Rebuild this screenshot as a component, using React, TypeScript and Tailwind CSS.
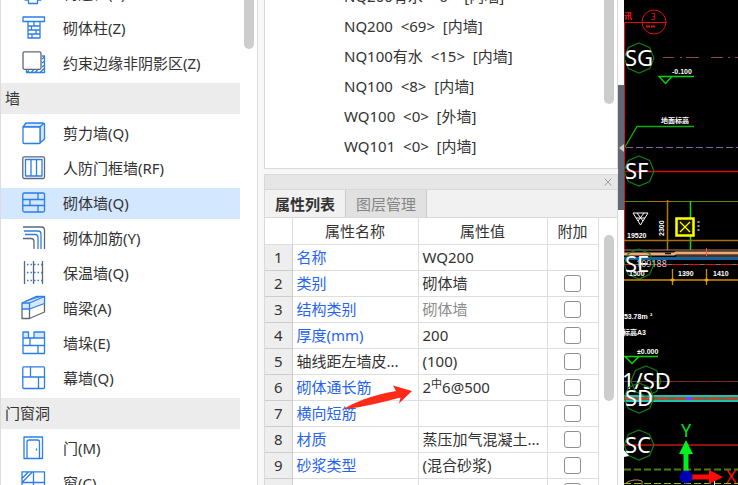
import { ReactNode, useState } from 'react';
import { X } from 'lucide-react';
import clsx from 'clsx';

interface ToolItem {
  label: string;
  icon: ReactNode;
}

interface Property {
  name: string;
  value: ReactNode;
  plainName?: boolean;
  mutedValue?: boolean;
  noExtra?: boolean;
}

const BLUE = '#2b7de9';
const SLATE = '#5f6675';

function Icon({ children }: { children: ReactNode }) {
  return (
    <svg
      viewBox="0 0 24 24"
      className="h-6 w-6 shrink-0 overflow-visible"
      fill="none"
      stroke={BLUE}
      strokeWidth="1.3"
      strokeLinejoin="round"
      aria-hidden="true"
    >
      {children}
    </svg>
  );
}

const columnTools: ToolItem[] = [
  {
    label: '构造柱(Z)',
    icon: (
      <Icon>
        <path d="M3 6h16v13h-3.5v3.5h-9V19H3z" />
      </Icon>
    ),
  },
  {
    label: '砌体柱(Z)',
    icon: (
      <Icon>
        <path d="M1 1h21.5v4.5H1zM6 5.5V22h12V5.5M6 10h12M6 14h12M6 18h12M12 5.5V10M9.5 10v4M14 14v4M10 18v4" />
      </Icon>
    ),
  },
  {
    label: '约束边缘非阴影区(Z)',
    icon: (
      <Icon>
        <path d="M4.5 19v2.5h18V5H20M20 8l2.5-2M20 12l2.5-2M20 16l2.5-2M18 21.5l4-4M13 21.5l2.5-2.5M9 21.5l2.5-2.5M5 21.5l2-2" />
        <rect x="1" y="0.8" width="18" height="17.5" rx="1.5" fill="#fff" stroke={SLATE} />
      </Icon>
    ),
  },
];

const wallTools: ToolItem[] = [
  {
    label: '剪力墙(Q)',
    icon: (
      <Icon>
        <path d="M1 6l3-4h17l1.5.5V18L18 22V6z" fill="#d6e8fd" />
        <rect x="1" y="6" width="17" height="16.5" rx="1" fill="#fff" />
        <path d="M18 6l4-4" />
      </Icon>
    ),
  },
  {
    label: '人防门框墙(RF)',
    icon: (
      <Icon>
        <rect x="0.8" y="0.8" width="21.7" height="21.7" rx="1.5" stroke={SLATE} />
        <path d="M3.5 3.5h16.5v16.5H3.500zM9 3.5V20M14.5 3.5V20" />
      </Icon>
    ),
  },
  {
    label: '砌体墙(Q)',
    icon: (
      <Icon>
        <rect x="0.8" y="2" width="21.7" height="19" rx="1.5" />
        <path d="M.8 8.5h21.7M.8 14.5h21.7M16 2v6.5M8 8.5v6M16 14.5V21" />
      </Icon>
    ),
  },
  {
    label: '砌体加筋(Y)',
    icon: (
      <Icon>
        <path d="M1 1h18.5q3 0 3 3v19" stroke={SLATE} />
        <path d="M2 5h14q3 0 3 3v15M3 8.5h10q3 0 3 3V23" />
        <path d="M1 12.5h8q3 0 3 3V23" stroke={SLATE} />
      </Icon>
    ),
  },
  {
    label: '保温墙(Q)',
    icon: (
      <Icon>
        <path d="M2.5 0v23M11.5 0v23M20.5 0v23" stroke={SLATE} />
        <path d="M5 3.5h15M5 11.5h15M5 19.5h15" strokeDasharray="1.5 2" />
      </Icon>
    ),
  },
  {
    label: '暗梁(A)',
    icon: (
      <Icon>
        <path d="M0 13v9.5h7.5V13M7.5 22.5l15-6.5V8" stroke={SLATE} />
        <path d="M0 7L14 .5h8.500V7.5L7.5 13H0z" fill="#d6e8fd" />
        <path d="M0 7h7.5l15-6.5M7.5 7v6M4 5l14-4.500" />
      </Icon>
    ),
  },
  {
    label: '墙垛(E)',
    icon: (
      <Icon>
        <path d="M1 1h5.5v6H1zM12 1h10.5v6H12z" fill="#d6e8fd" />
        <path d="M1 7v15.5h21.5V7M6.5 7H12M1 14.5h21.5M8 7v7.5M16 14.5v8" />
      </Icon>
    ),
  },
  {
    label: '幕墙(Q)',
    icon: (
      <Icon>
        <rect x="0.8" y="0.8" width="21.7" height="21.7" rx="1" />
        <path d="M.8 11h21.7M8.500.8V11M16.5 11v11.5" />
      </Icon>
    ),
  },
];

const openingTools: ToolItem[] = [
  {
    label: '门(M)',
    icon: (
      <Icon>
        <path d="M2 1h18.5v21.5H2zM5 22.5V6q0-2 2-2h8.5q2 0 2 2v16.5M14.5 12.5v2" />
      </Icon>
    ),
  },
  {
    label: '窗(C)',
    icon: (
      <Icon>
        <path d="M0 .8h22.5v21.7H0zM0 11.5h22.5M11.5.8v21.7M0 7.5L6.5.8M0 11.5L10.5.8" />
      </Icon>
    ),
  },
];

const toolGroups = [
  { title: '', items: columnTools },
  { title: '墙', items: wallTools },
  { title: '门窗洞', items: openingTools },
];

const components = [
  'NQ200有水  <6>  [内墙]',
  'NQ200  <69>  [内墙]',
  'NQ100有水  <15>  [内墙]',
  'NQ100  <8>  [内墙]',
  'WQ100  <0>  [外墙]',
  'WQ101  <0>  [内墙]',
];

const properties: Property[] = [
  { name: '名称', value: 'WQ200', noExtra: true },
  { name: '类别', value: '砌体墙' },
  { name: '结构类别', value: '砌体墙', mutedValue: true },
  { name: '厚度(mm)', value: '200' },
  { name: '轴线距左墙皮...', value: '(100)', plainName: true },
  {
    name: '砌体通长筋',
    value: (
      <>
        2<sup className="text-[11px]">中</sup>6@500
      </>
    ),
  },
  { name: '横向短筋', value: '' },
  { name: '材质', value: '蒸压加气混凝土...' },
  { name: '砂浆类型', value: '(混合砂浆)' },
  { name: '', value: '' },
];

function ToolPanel() {
  const [selected, setSelected] = useState('砌体墙(Q)');

  return (
    <nav className="flex w-[258px] shrink-0 justify-between border-x border-[#dcdcdc] bg-white">
      <div className="-mt-[22px] flex w-[239px] flex-col gap-1">
        {toolGroups.map((group) => (
          <div key={group.title} className="flex flex-col gap-1">
            {group.title && (
              <h2 className="flex h-[31px] items-center bg-[#ececec] px-1 pb-0.5">{group.title}</h2>
            )}
            {group.items.map((item) => (
              <button
                key={item.label}
                onClick={() => setSelected(item.label)}
                className={clsx(
                  'flex h-[31px] shrink-0 items-center gap-[17px] pb-0.5 pl-[21px] text-left',
                  selected === item.label && 'bg-[#d3e7ff]'
                )}
              >
                {item.icon}
                {item.label}
              </button>
            ))}
          </div>
        ))}
      </div>
      <div className="mr-[3px] h-[49px] w-[10px] rounded-b-full bg-[#cdcdcd]" />
    </nav>
  );
}

function ComponentList() {
  return (
    <section className="flex h-[169px] shrink-0 justify-between overflow-hidden border-x border-b border-[#d9d9d9] bg-white">
      <ul className="-mt-[19px] pl-[79px]">
        {components.map((name) => (
          <li key={name} className="flex h-[30px] items-center whitespace-pre">
            {name}
          </li>
        ))}
      </ul>
      <div className="mr-[3px] h-[104px] w-[10px] rounded-b-full bg-[#cdcdcd]" />
    </section>
  );
}

function PropertyTable() {
  return (
    <table className="w-[333px] table-fixed border-collapse">
      <colgroup>
        <col className="w-[27px]" />
        <col className="w-[126px]" />
        <col className="w-[129px]" />
        <col className="w-[51px]" />
      </colgroup>
      <thead>
        <tr className="h-[26px]">
          <th className="border-r border-b border-[#dedede]" />
          <th className="border-r border-b border-[#dedede] font-normal">属性名称</th>
          <th className="border-r border-b border-[#dedede] font-normal">属性值</th>
          <th className="border-r border-b border-[#dedede] font-normal">附加</th>
        </tr>
      </thead>
      <tbody>
        {properties.map((property, i) => (
          <tr key={property.name} className="h-[26px]">
            <td className="border-r border-b border-[#cccccc] bg-[#eeeeee] text-center">
              {property.name && i + 1}
            </td>
            <td
              className={clsx(
                'border-r border-b border-[#dedede] pl-1 whitespace-nowrap',
                !property.plainName && 'text-[#2563f5]'
              )}
            >
              {property.name}
            </td>
            <td
              className={clsx(
                'border-r border-b border-[#dedede] pl-1 whitespace-nowrap',
                property.mutedValue && 'text-[#8c8c8c]'
              )}
            >
              {property.value}
            </td>
            <td className="border-r border-b border-[#dedede]">
              {!property.noExtra && (
                <input
                  type="checkbox"
                  aria-label={property.name || '附加'}
                  className="mx-auto block h-[17px] w-[17px] appearance-none rounded-[3px] border border-[#8f8f8f] bg-white checked:bg-[#2b7de9]"
                />
              )}
            </td>
          </tr>
        ))}
      </tbody>
    </table>
  );
}

function PropertyPanel() {
  const [tab, setTab] = useState('属性列表');

  return (
    <section className="relative mt-[5px] flex min-h-0 flex-1 flex-col border-x border-t border-[#d9d9d9] bg-white">
      <div className="flex h-[14px] shrink-0 items-center justify-end bg-[#e6e6e6] pr-[3px]">
        <button aria-label="关闭">
          <X className="h-3 w-3 text-[#9a9a9a]" />
        </button>
      </div>
      <div className="flex h-[29px] shrink-0 border-y border-[#d9d9d9] bg-[#f1f1f1]">
        {['属性列表', '图层管理'].map((name) => (
          <button
            key={name}
            onClick={() => setTab(name)}
            className={clsx(
              'w-[81px] border-r border-[#c8ccd2]',
              tab === name ? 'font-bold' : 'bg-[#e1e1e1] text-[#858585]'
            )}
          >
            {name}
          </button>
        ))}
      </div>
      <div className="flex min-h-0 flex-1 justify-between overflow-hidden">
        <PropertyTable />
        <div className="mt-[17px] mr-[3px] h-[166px] w-[10px] rounded-full bg-[#cdcdcd]" />
      </div>
      {/* pointer to the rebar value */}
      <svg
        viewBox="0 0 70 26"
        className="pointer-events-none absolute top-[209px] left-[80px] h-[26px] w-[70px]"
        aria-hidden="true"
      >
        <path d="M0 24C8 19.5 26 11 51 7L48 1.5 67 7 54 19.500 55.500 13.500C36 19 18 23 0 25z" fill="#ff2a18" />
      </svg>
    </section>
  );
}

function AxisMark({ x = 15, y, label, textX = 1 }: { x?: number; y: number; label: string; textX?: number }) {
  return (
    <>
      <path
        d="M0-15L10.6-10.6 15 0 10.6 10.6 0 15-10.6 10.6-15 0-10.6-10.6z"
        transform={`translate(${x} ${y})`}
        fill="none"
        stroke="#0f7a16"
        strokeWidth="1.2"
      />
      <text x={textX} y={y + 8} fontSize="22" fill="#fff">
        {label}
      </text>
    </>
  );
}

function Drawing() {
  return (
    <main className="min-w-0 flex-1 bg-black">
      <svg className="block h-full w-full" fontFamily='"Noto Sans", "Noto Sans CJK SC", sans-serif'>
        {/* section mark */}
        <g stroke="#e01010" fill="none">
          <path d="M.5 255V22.5H43" />
          <circle cx="30" cy="22" r="12" />
          <path d="M22 26.5h10" strokeWidth="2" strokeDasharray="4 1" />
        </g>
        <text x="0" y="19" fontSize="8" fontWeight="bold" fill="#ff1010">
          讯
        </text>
        <text x="27" y="20" fontSize="8" fill="#ff1010">
          3
        </text>

        <path d="M39 57.5h11M56 57.5h2M62 57.5h13M87 57.5h12M104 57.5h2M111 57.5h400" stroke="#8a4a4a" />
        <AxisMark y={58} label="SG" />
        <path d="M70 76.5H35l6.5 7 6.500-7" stroke="#00d800" strokeWidth="1.3" fill="none" />
        <path d="M1 147L13 126.5H70" stroke="#10b010" strokeWidth="1.3" fill="none" />
        <path d="M2 147.5h2000" stroke="#8a60a5" strokeDasharray="7 3" />

        <path d="M0 171.5h2000" stroke="#d01010" strokeWidth="1.5" />
        <AxisMark y={171} label="SF" />

        {/* wall strip */}
        <path d="M0 201.5h2000" stroke="#5f8a00" />
        <path d="M24 201.5h24" stroke="#b07000" />
        <path d="M43.5 200v50" stroke="#b07800" strokeWidth="1.5" />
        <path d="M66.5 201v49" stroke="#00e020" strokeWidth="1.5" />
        <path d="M0 240.5h2000" stroke="#a87000" strokeWidth="1.5" />
        <path d="M9 213h15l-7.5 12zM12 218h9M13 213l6 8M20 213l-6 8" stroke="#fff" fill="none" />
        <rect x="52.5" y="218.5" width="17" height="17" fill="#151500" stroke="#ffff00" strokeWidth="2.5" />
        <path d="M56 222l10 10M66 222l-10 10" stroke="#ffff00" strokeWidth="1.3" />
        <path d="M74.5 221v11" stroke="#999" strokeWidth="2" strokeDasharray="2 2" />
        <path d="M0 250h2000" stroke="#b08060" />
        <path d="M0 254h50l2-1h2000" stroke="#eda878" strokeWidth="3" fill="none" />
        <path d="M41 253.5h6" stroke="#201008" strokeWidth="1.5" />
        <path d="M52 256h2000" stroke="#6b432b" strokeWidth="1.5" />
        <path d="M0 258.5h2000" stroke="#14619c" strokeWidth="3" />
        <path d="M0 264.5h2000" stroke="#777" />
        <path d="M0 264.5h2000" stroke="#e01010" strokeDasharray="12 4" />
        <path d="M82.5 248v8" stroke="#ff5050" />
        <AxisMark y={264} label="SE" />
        <path d="M0 280h2000M48.5 269v16M82.5 269v16" stroke="#d09000" strokeWidth="1.3" />
        <path d="M46 280l2.500-2 2.500 2-2.500 2zM80 280l2.500-2 2.500 2-2.500 2z" fill="#f0a800" />

        <path d="M0 356.5h34M1 356.5l7 7 7-7" stroke="#00d800" strokeWidth="1.5" fill="none" />

        <path d="M0 381.5h2000" stroke="#5a4040" />
        <path d="M42 381.5h2000" stroke="#8a2020" strokeDasharray="14 4" />
        <path d="M0 398.5h2000" stroke="#20c0b0" strokeWidth="7" />
        <path d="M0 398.5h2000" stroke="#8a5a40" strokeWidth="3" />
        <path d="M0 398.5h2000" stroke="#ff3020" strokeDasharray="10 7" />
        <path d="M62 398.5h6" stroke="#8040ff" strokeWidth="3" />
        <AxisMark x={22} y={381} label="1/SD" textX={-2} />
        <AxisMark y={398} label="SD" />
        <path d="M0 445h2000" stroke="#c01515" strokeWidth="1.5" />
        <AxisMark y={445} label="SC" />
        <path d="M0 450l5 6-5 1z" fill="#fff" />

        {/* small annotations */}
        <g fill="#fff" fontSize="7" fontWeight="bold" fontFamily='"Liberation Sans", "Noto Sans CJK SC", sans-serif'>
          <text x="48" y="74">-0.100</text>
          <text x="37" y="123">地面标高</text>
          <text x="3" y="238">19520</text>
          <text x="40" y="236" transform="rotate(-90 40 236)">2300</text>
          <text x="5" y="276">1500</text>
          <text x="54" y="276">1390</text>
          <text x="89" y="276">1410</text>
          <text x="-4" y="319">953.78m</text>
          <text x="26" y="318">²</text>
          <text x="-1" y="335">标高A3</text>
          <text x="13" y="354">±0.000</text>
        </g>
        <text x="12" y="267" fontSize="9" fill="#ccc">109188</text>

        {/* origin and axes */}
        <path d="M0 469.5h2000" stroke="#4c8000" strokeWidth="2" strokeDasharray="7 3" />
        <path d="M0 483.5h2000" stroke="#86c800" strokeDasharray="7 3" />
        <path d="M2 483q8-5 16-2v4" stroke="#c09060" fill="none" />
        <path d="M90.5 481v20" stroke="#fff" />
        <path d="M62 440l7 14h-4.5v18h-5v-18H55z" fill="#00f020" />
        <path d="M99 477l-14 7v-4.5H66v-5h19V470z" fill="#ff0a0a" />
        <circle cx="62" cy="477" r="6.5" fill="#0000b8" />
        <text x="57" y="437" fontSize="18" fill="#00e020">Y</text>
        <text x="102" y="483" fontSize="18" fill="#f01010">X</text>
      </svg>
    </main>
  );
}

export default function App() {
  return (
    <div className="flex h-screen overflow-hidden bg-[#f7f7f7] font-['Noto_Sans','Noto_Sans_CJK_SC',sans-serif] text-[15px] leading-5 text-[#333]">
      <ToolPanel />
      <div className="ml-[6px] flex w-[354px] shrink-0 flex-col">
        <ComponentList />
        <PropertyPanel />
      </div>
      {/* collapse handle */}
      <div className="flex w-[6px] shrink-0 flex-col bg-[#fafafa] pt-[85px]">
        <button aria-label="折叠" className="flex h-[125px] items-center bg-[#5f6974]">
          <svg viewBox="0 0 6 8" className="h-2 w-[6px]" aria-hidden="true">
            <path d="M6 0v8L1 4z" fill="#ccc" />
          </svg>
        </button>
      </div>
      <Drawing />
    </div>
  );
}
